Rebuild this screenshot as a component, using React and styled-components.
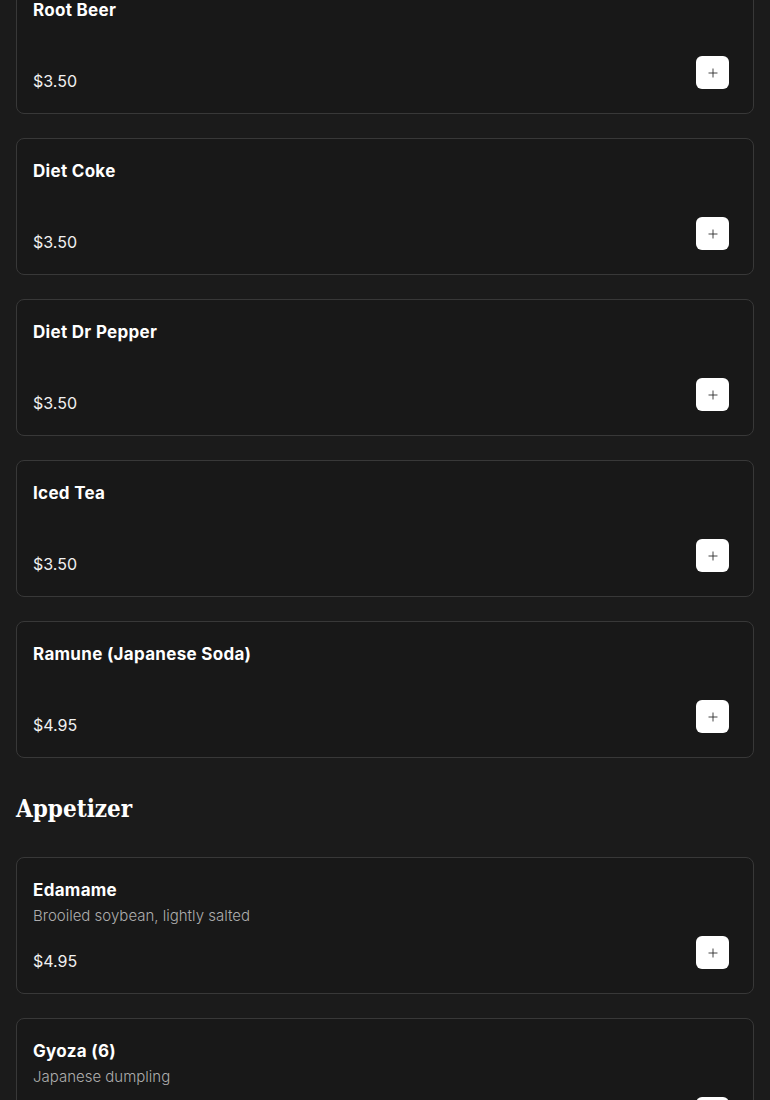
import styled, { createGlobalStyle } from 'styled-components';
import { Plus } from 'lucide-react';

const GlobalStyle = createGlobalStyle`
  html, body {
    margin: 0;
    padding: 0;
    background: #1b1b1b;
  }
  body {
    font-family: Inter, "Open Sans", "Liberation Sans", sans-serif;
    color: #f2f2f2;
    overflow: hidden;
  }
`;

const Page = styled.main`
  padding: 0 16px;
  margin-top: -23px; /* scrolled down into the Drinks section */
`;

const Section = styled.section`
  display: flex;
  flex-direction: column;
  gap: 24px;
`;

const SectionTitle = styled.h2`
  margin: 33px 0 30px;
  font-family: "DejaVu Serif Condensed", "DejaVu Serif", serif;
  font-weight: 700;
  font-size: 24px;
  line-height: 36px;
  color: #ffffff;
`;

const Card = styled.article`
  display: flex;
  flex-direction: column;
  background: #181818;
  border: 1px solid #383838;
  border-radius: 8px;
  padding: 16px 24px 16px 16px;
`;

const ItemName = styled.h3`
  margin: 0;
  font-size: 17px;
  font-weight: 700;
  letter-spacing: 0.3px;
  line-height: 32px;
  color: #ffffff;
`;

const ItemDesc = styled.p`
  margin: 0;
  min-height: 20px;
  font-size: 15px;
  font-weight: 300;
  line-height: 20px;
  color: #adadad;
`;

const Footer = styled.div`
  display: flex;
  justify-content: space-between;
  align-items: flex-end;
  margin: 10px 0 8px;
`;

const Price = styled.span`
  font-size: 16px;
  line-height: 16px;
  color: #f0f0f0;
`;

const AddButton = styled.button`
  display: flex;
  align-items: center;
  justify-content: center;
  width: 33px;
  height: 33px;
  padding: 0;
  border: none;
  border-radius: 6px;
  background: #ffffff;
  color: #2a2a2a;
  cursor: pointer;
`;

const drinks = [
  { name: 'Root Beer', price: '$3.50' },
  { name: 'Diet Coke', price: '$3.50' },
  { name: 'Diet Dr Pepper', price: '$3.50' },
  { name: 'Iced Tea', price: '$3.50' },
  { name: 'Ramune (Japanese Soda)', price: '$4.95' },
];

const appetizers = [
  { name: 'Edamame', desc: 'Brooiled soybean, lightly salted', price: '$4.95' },
  { name: 'Gyoza (6)', desc: 'Japanese dumpling', price: '$5.95' },
  { name: 'Agedashi Tofu', desc: 'Fried tofu in light broth', price: '$5.95' },
];

const MenuItem = ({ item }) => (
  <Card>
    <ItemName>{item.name}</ItemName>
    <ItemDesc>{item.desc}</ItemDesc>
    <Footer>
      <Price>{item.price}</Price>
      <AddButton aria-label={`Add ${item.name}`}>
        <Plus size={14} strokeWidth={1.5} />
      </AddButton>
    </Footer>
  </Card>
);

export default function App() {
  return (
    <>
      <GlobalStyle />
      <Page>
        <Section>
          {drinks.map((d) => (
            <MenuItem key={d.name} item={d} />
          ))}
        </Section>
        <SectionTitle>Appetizer</SectionTitle>
        <Section>
          {appetizers.map((a) => (
            <MenuItem key={a.name} item={a} />
          ))}
        </Section>
      </Page>
    </>
  );
}
